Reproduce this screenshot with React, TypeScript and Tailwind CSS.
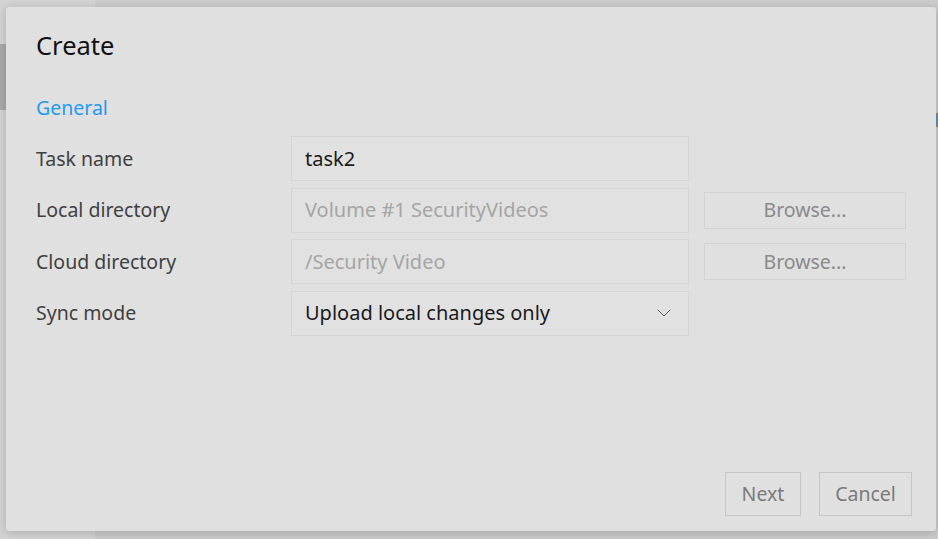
import { ChevronDown } from 'lucide-react'

const font = { fontFamily: '"Noto Sans", "Open Sans", sans-serif' }

function Field({ label, children }: { label: string; children: React.ReactNode }) {
  return (
    <div className="flex items-center h-[45px]">
      <div className="w-[255px] text-[19.5px] text-[#3f3f3f]">{label}</div>
      {children}
    </div>
  )
}

function Box({ children, muted }: { children: React.ReactNode; muted?: boolean }) {
  return (
    <div
      className={`w-[398px] h-full flex items-center justify-between pl-[13px] pr-[12px] border border-[#d5d5d5] bg-[#e1e1e1] text-[20px] ${
        muted ? 'text-[#a5a5a5]' : 'text-[#1a1a1a]'
      }`}
    >
      {children}
    </div>
  )
}

function Browse() {
  return (
    <button className="ml-[15px] w-[202px] h-[37px] border border-[#d3d3d3] text-[19.5px] text-[#8a8a8a] bg-[#e0e0e0]">
      Browse...
    </button>
  )
}

export default function App() {
  return (
    <div className="relative w-[938px] h-[539px] overflow-hidden flex bg-[#cbcbcb]" style={font}>
      {/* dimmed page behind */}
      <div className="w-[95px] h-full bg-[#d3d3d3] pt-[44px]">
        <div className="h-[66px] bg-[#a9a9a9]" />
      </div>
      <div className="flex-1 relative">
        <div className="absolute right-0 top-[113px] w-[3px] h-[14px] bg-[#5a8fc8] border border-[#c07a2a]" />
      </div>

      {/* dialog */}
      <div className="absolute left-[6px] top-[7px] w-[930px] h-[524px] rounded-[3px] bg-[#e0e0e0] shadow-[0_2px_10px_rgba(0,0,0,0.18)] flex flex-col px-[30px]">
        <h1 className="mt-[22px] text-[25.5px] leading-[32px] text-[#111]">Create</h1>
        <div className="mt-[34px] text-[19.5px] leading-[26px] text-[#1e9bf0]">General</div>

        <div className="mt-[15px] flex flex-col gap-[6.5px]">
          <Field label="Task name">
            <Box>task2</Box>
          </Field>
          <Field label="Local directory">
            <Box muted>Volume #1 SecurityVideos</Box>
            <Browse />
          </Field>
          <Field label="Cloud directory">
            <Box muted>/Security Video</Box>
            <Browse />
          </Field>
          <Field label="Sync mode">
            <Box>
              <span>Upload local changes only</span>
              <ChevronDown size={24} strokeWidth={1} className="text-[#555]" />
            </Box>
          </Field>
        </div>

        <div className="mt-auto mb-[15px] flex justify-end gap-[18px] mr-[-6px]">
          <button className="w-[76px] h-[44px] border border-[#c6c6c6] text-[19.5px] text-[#7a7a7a]">Next</button>
          <button className="w-[93px] h-[44px] border border-[#c6c6c6] text-[19.5px] text-[#7a7a7a]">Cancel</button>
        </div>
      </div>
    </div>
  )
}
